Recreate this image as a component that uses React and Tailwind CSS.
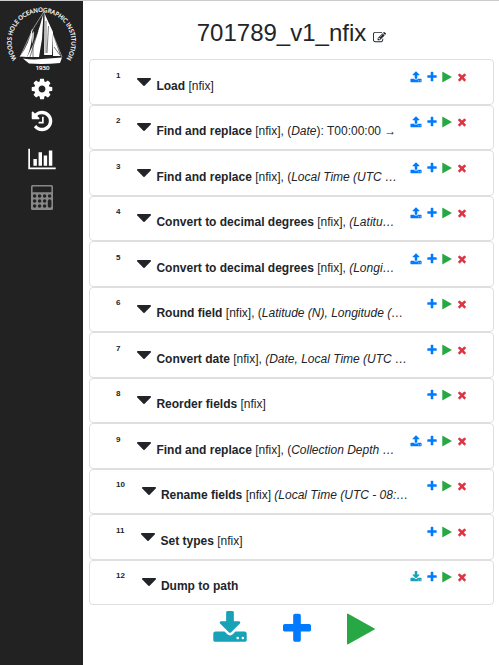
import React from 'react';

const PATHS = {
  plus: 'M1600 736v192q0 40-28 68t-68 28h-416v416q0 40-28 68t-68 28h-192q-40 0-68-28t-28-68v-416h-416q-40 0-68-28t-28-68v-192q0-40 28-68t68-28h416v-416q0-40 28-68t68-28h192q40 0 68 28t28 68v416h416q40 0 68 28t28 68z',
  times: 'M1490 1322q0 40-28 68l-136 136q-28 28-68 28t-68-28l-294-294-294 294q-28 28-68 28t-68-28l-136-136q-28-28-28-68t28-68l294-294-294-294q-28-28-28-68t28-68l136-136q28-28 68-28t68 28l294 294 294-294q28-28 68-28t68 28l136 136q28 28 28 68t-28 68l-294 294 294 294q28 28 28 68z',
  play: 'M1576 927l-1328 738q-23 13-39.5 3t-16.5-36v-1472q0-26 16.5-36t39.5 3l1328 738q23 13 23 31t-23 31z',
  caret: 'M1408 704q0 26-19 45l-448 448q-19 19-45 19t-45-19l-448-448q-19-19-19-45t19-45 45-19h896q26 0 45 19t19 45z',
  download: 'M1344 1344q0-26-19-45t-45-19-45 19-19 45 19 45 45 19 45-19 19-45zm256 0q0-26-19-45t-45-19-45 19-19 45 19 45 45 19 45-19 19-45zm128-224v320q0 40-28 68t-68 28h-1472q-40 0-68-28t-28-68v-320q0-40 28-68t68-28h465l135 136q58 56 136 56t136-56l136-136h464q40 0 68 28t28 68zm-325-569q17 41-14 70l-448 448q-18 19-45 19t-45-19l-448-448q-31-29-14-70 17-39 59-39h256v-448q0-26 19-45t45-19h256q26 0 45 19t19 45v448h256q42 0 59 39z',
  upload: 'M1344 1472q0-26-19-45t-45-19-45 19-19 45 19 45 45 19 45-19 19-45zm256 0q0-26-19-45t-45-19-45 19-19 45 19 45 45 19 45-19 19-45zm128-224v320q0 40-28 68t-68 28h-1472q-40 0-68-28t-28-68v-320q0-40 28-68t68-28h427q21 56 70.5 92t110.5 36h256q61 0 110.5-36t70.5-92h427q40 0 68 28t28 68zm-325-648q-17 40-59 40h-256v448q0 26-19 45t-45 19h-256q-26 0-45-19t-19-45v-448h-256q-42 0-59-40-17-39 14-69l448-448q18-19 45-19t45 19l448 448q31 30 14 69z',
  cog: 'M1152 896q0-106-75-181t-181-75-181 75-75 181 75 181 181 75 181-75 75-181zm512-109v222q0 12-8 23t-20 13l-185 28q-19 54-39 91 35 50 107 138 10 12 10 25t-9 23q-27 37-99 108t-94 71q-12 0-26-9l-138-108q-44 23-91 38-16 136-29 186-7 28-36 28h-222q-14 0-24.5-8.5t-11.5-21.5l-28-184q-49-16-90-37l-141 107q-10 9-25 9-14 0-25-11-126-114-165-168-7-10-7-23 0-12 8-23 15-21 51-66.5t54-70.5q-27-50-41-99l-183-27q-13-2-21-12.5t-8-23.5v-222q0-12 8-23t19-13l186-28q14-46 39-92-40-57-107-138-10-12-10-24 0-10 9-23 26-36 98.5-107.5t94.5-71.5q13 0 26 10l138 107q44-23 91-38 16-136 29-186 7-28 36-28h222q14 0 24.5 8.5t11.5 21.5l28 184q49 16 90 37l142-107q9-9 24-9 13 0 25 10 129 119 165 170 7 8 7 22 0 12-8 23-15 21-51 66.5t-54 70.5q26 50 41 98l183 28q13 2 21 12.5t8 23.5z',
  history: 'M1664 896q0 156-61 298t-164 245-245 164-298 61q-172 0-327-72.5t-264-204.5q-7-10-6.5-22.5t8.5-20.5l137-138q10-9 25-9 16 2 23 12 73 95 179 147t225 52q104 0 198.5-40.5t163.5-109.5 109.5-163.5 40.5-198.5-40.5-198.5-109.5-163.5-163.5-109.5-198.5-40.5q-98 0-188 35.5t-160 101.5l137 138q31 30 14 69-17 40-59 40h-448q-26 0-45-19t-19-45v-448q0-42 40-59 39-17 69 14l130 129q107-101 244.5-156.5t284.5-55.5q156 0 298 61t245 164 164 245 61 298zm-640-288v448q0 14-9 23t-23 9h-320q-14 0-23-9t-9-23v-64q0-14 9-23t23-9h224v-352q0-14 9-23t23-9h64q14 0 23 9t9 23z',
  chart: 'M640 896v512h-256v-512h256zm384-512v1024h-256v-1024h256zm1024 1152v128h-2048v-1536h128v1408h1920zm-640-896v768h-256v-768h256zm384-384v1152h-256v-1152h256z',
  edit: 'M888 1184l116-116-152-152-116 116v56h96v96h56zm440-720q-16-16-33 1l-350 350q-17 17-1 33t33-1l350-350q17-17 1-33zm80 594v190q0 119-84.5 203.5t-203.5 84.5h-832q-119 0-203.5-84.5t-84.5-203.5v-832q0-119 84.5-203.5t203.5-84.5h832q63 0 117 25 15 7 18 23 3 17-9 29l-49 49q-14 14-32 8-23-6-45-6h-832q-66 0-113 47t-47 113v832q0 66 47 113t113 47h832q66 0 113-47t47-113v-126q0-13 9-22l64-64q15-15 35-7t20 29zm-96-738l288 288-672 672h-288v-288zm444 132l-92 92-288-288 92-92q28-28 68-28t68 28l152 152q28 28 28 68t-28 68z',
};

function Icon({ name, box = '0 0 1792 1792', className }) {
  return (
    <svg viewBox={box} className={className} fill="currentColor" aria-hidden="true">
      <path d={PATHS[name]} />
    </svg>
  );
}

function Calculator() {
  const keys = [];
  for (let r = 0; r < 3; r++) {
    for (let c = 0; c < 4; c++) {
      if (c === 3 && r > 0) continue;
      keys.push(<circle key={r + '-' + c} cx={3.6 + c * 5} cy={11 + r * 5} r="1.8" fill="#222" />);
    }
  }
  return (
    <svg viewBox="0 0 22 25" className="h-[25px] w-[22px]" aria-hidden="true">
      <rect width="22" height="25" rx="1.5" fill="#888" />
      <rect x="1.6" y="1.6" width="18.8" height="5.6" rx="0.5" fill="#222" />
      {keys}
      <rect x="16.8" y="14.2" width="3.6" height="8.6" rx="1.8" fill="#222" />
    </svg>
  );
}

function Logo() {
  return (
    <svg viewBox="0 0 83 74" className="h-[74px] w-full" role="img" aria-label="Woods Hole Oceanographic Institution 1930">
      <path id="ring" d="M18.5 60.3A30 30 0 1 1 64.5 60.3" fill="none" />
      <text fill="#fff" stroke="#fff" strokeWidth="0.2" fontSize="6" fontFamily="'Open Sans', sans-serif" textAnchor="middle">
        <textPath href="#ring" startOffset="50%">WOODS HOLE OCEANOGRAPHIC INSTITUTION</textPath>
      </text>
      <g fill="#fff">
        <path d="M43.500 12L42 38 39 56 27 56Q37 38 43.500 12Z" />
        <path d="M32 28Q32.500 44 27 56L20 55.500Q29 43 32 28Z" />
        <path d="M34 30Q34.500 38 32 43L31.500 33Z" />
        <path d="M44.500 13L53 31 52 54 44 54Z" />
        <path d="M53 34L60.500 55 53 55Z" />
        <path d="M23 57.500Q32 59 42 58T62 56.500L60 62Q44 63.500 29 62.500Z" />
      </g>
      <path d="M43.700 11V57M46 20V52M48.500 25L47 52M33 28V56M38 30L30 56M54 46L60 54" stroke="#222" strokeWidth="0.6" fill="none" />
      <path d="M43.700 11L62 56M43.700 11L31 31M33 28L20 56" stroke="#fff" strokeWidth="0.5" fill="none" />
      <text x="42.500" y="69" fill="#fff" stroke="#fff" strokeWidth="0.2" fontSize="6" fontFamily="'Open Sans', sans-serif" textAnchor="middle">1930</text>
    </svg>
  );
}

const STEPS = [
  { name: 'Load', detail: '[nfix]', io: 'upload' },
  { name: 'Find and replace', detail: <>[nfix], (<i>Date</i>): T00:00:00 →</>, io: 'upload' },
  { name: 'Find and replace', detail: <>[nfix], (<i>Local Time (UTC …</i></>, io: 'upload' },
  { name: 'Convert to decimal degrees', detail: <>[nfix], <i>(Latitu…</i></>, io: 'upload' },
  { name: 'Convert to decimal degrees', detail: <>[nfix], <i>(Longi…</i></>, io: 'upload' },
  { name: 'Round field', detail: <>[nfix], (<i>Latitude (N), Longitude (…</i></> },
  { name: 'Convert date', detail: <>[nfix], <i>(Date, Local Time (UTC …</i></> },
  { name: 'Reorder fields', detail: '[nfix]' },
  { name: 'Find and replace', detail: <>[nfix], (<i>Collection Depth …</i></>, io: 'upload' },
  { name: 'Rename fields', detail: <>[nfix] <i>(Local Time (UTC - 08:…</i></> },
  { name: 'Set types', detail: '[nfix]' },
  { name: 'Dump to path', detail: '', io: 'download' },
];

const NARROW = '192 0 1408 1792';

function Step({ index, step }) {
  return (
    <li className="flex items-start rounded border border-[#dfdfdf] bg-white pt-2 pr-[26px] pb-[9px] pl-[26px] even:pt-[7px]">
      <span className="mt-1 text-[8px] leading-[8px] font-bold">{index}</span>
      <button type="button" aria-label="Expand step" className="mt-[10px] ml-[17px]">
        <Icon name="caret" box="384 640 1024 576" className="h-2 w-[14px]" />
      </button>
      <div className="mt-[9px] ml-[5px] min-w-0 flex-1 text-[12px] leading-[18px] whitespace-nowrap">
        <b>{step.name}</b> {step.detail}
      </div>
      <div className="mt-[3px] flex gap-[5px]">
        {step.io === 'upload' && (
          <button type="button" aria-label="Upload" className="text-[#007bff]">
            <Icon name="upload" className="size-3" />
          </button>
        )}
        {step.io === 'download' && (
          <button type="button" aria-label="Download" className="text-[#17a2b8]">
            <Icon name="download" className="size-3" />
          </button>
        )}
        <button type="button" aria-label="Add step" className="text-[#007bff]">
          <Icon name="plus" box={NARROW} className="h-3 w-[10px]" />
        </button>
        <button type="button" aria-label="Run step" className="text-[#28a745]">
          <Icon name="play" box={NARROW} className="h-3 w-[10px]" />
        </button>
        <button type="button" aria-label="Delete step" className="text-[#dc3545]">
          <Icon name="times" box={NARROW} className="h-3 w-[10px]" />
        </button>
      </div>
    </li>
  );
}

export default function App() {
  return (
    <div className="flex min-h-screen border-t border-[#ccc] bg-white font-['Liberation_Sans',Arial,sans-serif] text-[#212529]">
      <nav className="flex w-[83px] shrink-0 flex-col items-center bg-[#222] text-white">
        <Logo />
        <button type="button" aria-label="Settings" className="mt-[2px]">
          <Icon name="cog" className="size-6" />
        </button>
        <button type="button" aria-label="History" className="mt-2">
          <Icon name="history" className="size-6" />
        </button>
        <button type="button" aria-label="Statistics" className="mt-[14px]">
          <Icon name="chart" box="0 0 2048 1792" className="h-6 w-7" />
        </button>
        <button type="button" aria-label="Calculator" className="mt-[14px]">
          <Calculator />
        </button>
      </nav>
      <main className="min-w-0 flex-1 pr-[5px] pl-[6px]">
        <header className="flex h-[58px] items-center justify-center pt-[6px]">
          <h1 className="text-2xl">701789_v1_nfix</h1>
          <button type="button" aria-label="Rename pipeline" className="mt-2 ml-[7px]">
            <Icon name="edit" className="size-[13px]" />
          </button>
        </header>
        <ol>
          {STEPS.map((step, i) => (
            <Step key={i} index={i + 1} step={step} />
          ))}
        </ol>
        <div className="flex items-center justify-center gap-9 pt-[6px] pl-[5px]">
          <button type="button" aria-label="Save pipeline" className="text-[#17a2b8]">
            <Icon name="download" box="64 0 1664 1792" className="h-9 w-[34px]" />
          </button>
          <button type="button" aria-label="Add step" className="text-[#007bff]">
            <Icon name="plus" box={NARROW} className="h-9 w-7" />
          </button>
          <button type="button" aria-label="Run pipeline" className="text-[#28a745]">
            <Icon name="play" box={NARROW} className="h-9 w-7" />
          </button>
        </div>
      </main>
    </div>
  );
}
